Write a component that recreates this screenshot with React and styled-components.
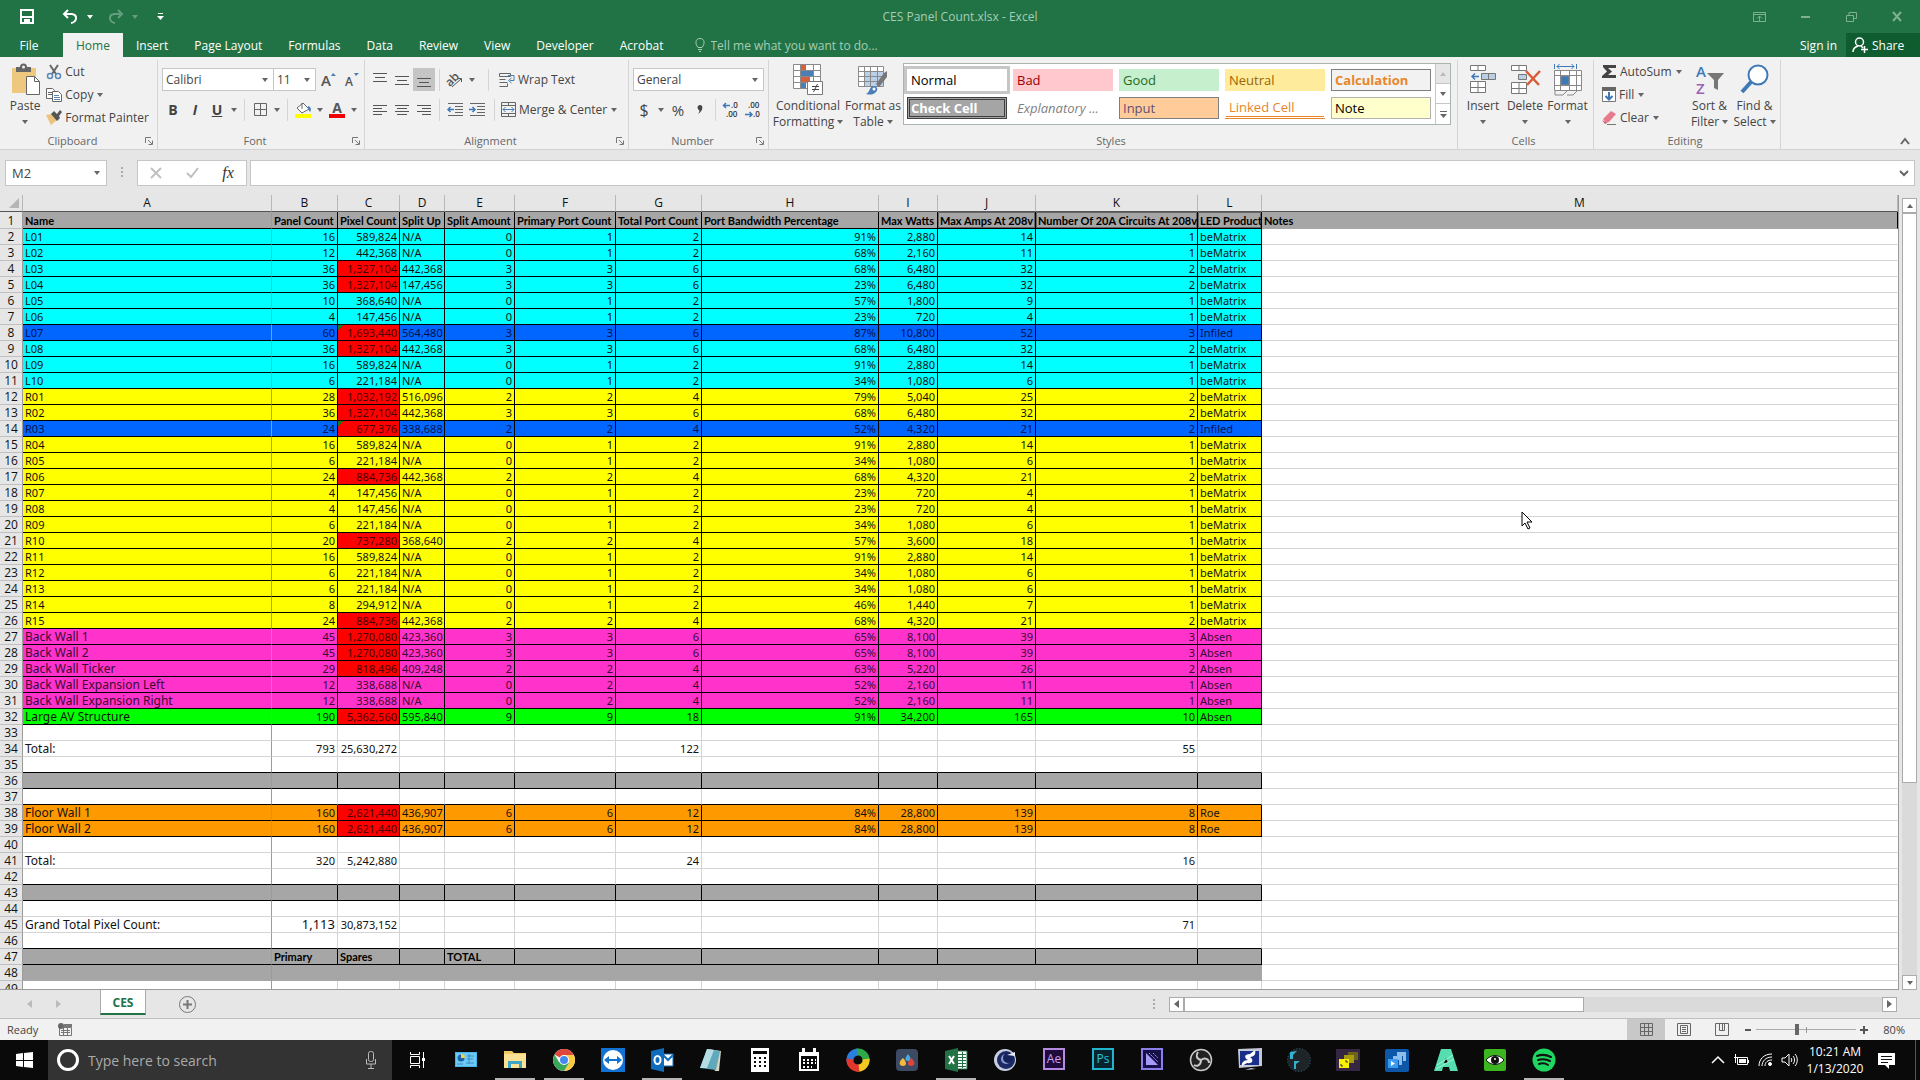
import React from 'react';
import styled, { createGlobalStyle, css } from 'styled-components';

const Global = createGlobalStyle`
  * {
    box-sizing: border-box;
  }
  body {
    margin: 0;
    overflow: hidden;
    font-family: 'Open Sans', 'Noto Sans', sans-serif;
    font-size: 12px;
    color: #444;
  }
  button, input, select {
    margin: 0;
    padding: 0;
    border: 0;
    background: none;
    font: inherit;
    color: inherit;
    outline: none;
    border-radius: 0;
  }
  svg {
    display: block;
    flex: none;
    overflow: visible;
  }
`;

const Window = styled.div`
  display: flex;
  flex-direction: column;
  height: 100vh;
  background: #e6e6e6;
`;

/* title bar and tabs */

const Header = styled.header`
  background: #217346;
  color: #fff;
`;

const TitleBar = styled.div`
  display: grid;
  grid-template-columns: 1fr auto 1fr;
  align-items: center;
  height: 33px;
`;

const QuickAccess = styled.div`
  display: flex;
  align-items: center;
  padding-left: 19px;
`;

const QuickButton = styled.button`
  display: flex;
  align-items: center;
  gap: 8px;
  height: 26px;
  margin-right: ${p => p.$gap || 0}px;
  opacity: ${p => (p.$off ? 0.3 : 1)};
`;

const Title = styled.h1`
  margin: 0;
  font-size: 12px;
  line-height: 30px;
  font-weight: 400;
  color: #a5cdb5;
`;

const Controls = styled.div`
  display: flex;
  justify-content: flex-end;
  height: 30px;
`;

const Control = styled.button`
  display: flex;
  align-items: center;
  justify-content: center;
  width: 46px;
  color: #7fb093;
`;

const Tabs = styled.nav`
  display: flex;
  height: 24px;
`;

const Tab = styled.button`
  padding: 0 13px;
  font-size: 12px;
  color: #fff;
  ${p => p.$file && css`
    width: 58px;
    margin-right: 5px;
  `}
  ${p => p.$active && css`
    background: #f1f1f1;
    color: #217346;
  `}
  ${p => p.$last && css`
    padding-right: 9px;
  `}
`;

const TellMe = styled.label`
  display: flex;
  flex: 1;
  align-items: center;
  gap: 6px;
  margin-left: 18px;
  color: #a5cdb5;
  input {
    width: 200px;
  }
  input::placeholder {
    color: #a5cdb5;
    opacity: 1;
  }
`;

const Share = styled.button`
  display: flex;
  align-items: center;
  gap: 4px;
  width: 74px;
  padding-left: 6px;
  background: #0e5c2f;
  color: #fff;
`;

/* ribbon */

const RibbonBar = styled.div`
  display: flex;
  height: 93px;
  background: #f1f1f1;
  border-bottom: 1px solid #d2d2d2;
`;

const GroupBox = styled.section`
  display: flex;
  flex-direction: column;
  width: ${p => p.$width}px;
  margin-top: 3px;
  border-right: 1px solid #d5d5d5;
`;

const GroupBody = styled.div`
  display: flex;
  flex: 1;
  padding: 0 4px 0 ${p => p.$left || 4}px;
`;

const GroupLabel = styled.div`
  display: flex;
  align-items: center;
  height: 17px;
  padding-right: 4px;
  font-size: 11px;
  color: #666;
  span {
    flex: 1;
    text-align: center;
  }
`;

const Launcher = styled.button`
  width: 8px;
  height: 8px;
`;

const Stack = styled.div`
  display: flex;
  flex-direction: column;
  gap: ${p => p.$gap || 0}px;
  padding-top: ${p => p.$top || 0}px;
`;

const Line = styled.div`
  display: flex;
  align-items: center;
  height: 23px;
`;

const Small = styled.button`
  display: flex;
  align-items: center;
  gap: 4px;
  height: 23px;
  padding: 0 4px 0 0;
  font-size: 12px;
  white-space: nowrap;
  > svg:first-child {
    margin-right: -1px;
  }
`;

const Tool = styled.button`
  display: flex;
  align-items: center;
  justify-content: center;
  width: ${p => p.$width || 22}px;
  height: 23px;
  font-size: ${p => p.$size || 14}px;
  line-height: 22px;
  font-weight: ${p => (p.$bold ? 700 : 400)};
  font-style: ${p => (p.$italic ? 'italic' : 'normal')};
  text-decoration: ${p => (p.$underline ? 'underline' : 'none')};
  background: ${p => (p.$on ? '#c5c5c5' : 'none')};
`;

const Rule = styled.span`
  width: 1px;
  height: 22px;
  margin: 0 ${p => p.$gap || 4}px;
  background: #d5d5d5;
`;

const Tall = styled.button`
  display: flex;
  flex-direction: column;
  align-items: center;
  width: ${p => p.$width}px;
  padding-top: 4px;
  font-size: 12px;
  line-height: 16px;
  white-space: nowrap;
  > svg:first-child {
    margin-bottom: 3px;
  }
  > svg:last-child {
    margin-top: 6px;
  }
  span {
    display: flex;
    align-items: center;
    gap: 3px;
    min-height: 16px;
  }
`;

const Field = styled.label`
  display: flex;
  align-items: center;
  width: ${p => p.$width}px;
  height: 23px;
  padding: 0 5px 0 3px;
  border: 1px solid #c6c6c6;
  background: #fff;
  & + & {
    margin-left: -1px;
  }
  select {
    flex: 1;
    min-width: 0;
    appearance: none;
  }
`;

const Gallery = styled.div`
  display: flex;
  height: 62px;
  margin-top: 3px;
  border: 1px solid #aab5ae;
  background: #fff;
`;

const Swatches = styled.div`
  display: grid;
  grid-template-columns: repeat(5, 100px);
  grid-auto-rows: 22px;
  gap: 6px;
  padding: 5px 4px 0 3px;
`;

const Swatch = styled.button`
  padding: 0 3px;
  background: ${p => p.$bg || '#fff'};
  color: ${p => p.$color};
  border: ${p => p.$border || '1px solid transparent'};
  outline: ${p => (p.$picked ? '3px solid #c6c6c6' : 'none')};
  font-size: 13px;
  line-height: 18px;
  font-weight: ${p => (p.$bold ? 700 : 400)};
  font-style: ${p => (p.$italic ? 'italic' : 'normal')};
  text-align: left;
  white-space: nowrap;
  ${p => p.$linked && css`
    border-bottom: 3px double #e8862a;
  `}
  ${p => p.$check && css`
    padding: 0 1px;
    line-height: 14px;
  `}
`;

const GalleryNav = styled.div`
  display: grid;
  grid-template-rows: repeat(3, 1fr);
  width: 15px;
  button {
    display: flex;
    align-items: center;
    justify-content: center;
    border-left: 1px solid #c6c6c6;
    border-bottom: 1px solid #c6c6c6;
  }
  button:first-child {
    background: #e6e6e6;
  }
  button:last-child {
    border-bottom: 0;
  }
`;

const Collapse = styled.button`
  align-self: flex-end;
  margin: 0 10px 4px auto;
`;

/* formula bar */

const FormulaBar = styled.div`
  display: flex;
  align-items: center;
  height: 45px;
  padding: 0 5px;
`;

const White = styled.label`
  display: flex;
  align-items: center;
  height: 26px;
  width: ${p => (p.$width ? p.$width + 'px' : 'auto')};
  flex: ${p => (p.$width ? 'none' : 1)};
  padding: 0 6px;
  border: 1px solid #c6c6c6;
  background: #fff;
  input {
    flex: 1;
    min-width: 0;
    font-size: 13px;
  }
`;

const Dots = styled.span`
  width: 2px;
  height: 11px;
  margin: 0 14px;
  background: repeating-linear-gradient(#aaa 0 2px, transparent 2px 4px);
`;

const FormulaTools = styled.div`
  display: flex;
  width: 110px;
  height: 26px;
  margin-right: 3px;
  border: 1px solid #c6c6c6;
  background: #fff;
  button {
    display: flex;
    flex: 1;
    align-items: center;
    justify-content: center;
  }
  i {
    font: italic 400 16px 'Liberation Serif', serif;
    color: #333;
  }
`;

/* sheet */

const Sheet = styled.main`
  display: flex;
  flex: 1;
  min-height: 0;
`;

const Grid = styled.div`
  position: relative;
  flex: 1;
  overflow: hidden;
  border-right: 1px solid #9b9b9b;
  border-bottom: 1px solid #9b9b9b;
  background: #fff;
`;

const Table = styled.table`
  width: 100%;
  table-layout: fixed;
  border-collapse: separate;
  border-spacing: 0;
  font-size: 11px;
  line-height: 15px;
  color: #111;
`;

const ColHead = styled.th`
  height: 17px;
  padding: 0;
  background: #e6e6e6;
  border-right: 1px solid #b8b8b8;
  border-bottom: 1px solid #555;
  font-size: 12px;
  line-height: 16px;
  font-weight: 400;
  svg {
    margin: 2px 3px 2px auto;
  }
`;

const RowHead = styled.th`
  padding: 0;
  background: #e6e6e6;
  border-right: 1px solid #9b9b9b;
  border-bottom: 1px solid #c0c0c0;
  font-size: 12px;
  font-weight: 400;
  text-align: center;
`;

const inks = {
  '#ff0000': '#480000',
  '#0066ff': '#00104e',
  '#ff33cc': '#3a0a30',
};

const Cell = styled.td`
  height: ${p => (p.$title ? 17 : 16)}px;
  padding: 0 2px;
  overflow: hidden;
  font-family: 'Noto Sans', sans-serif;
  font-size: ${p => p.$size || 11}px;
  white-space: nowrap;
  text-align: ${p => (p.$right ? 'right' : 'left')};
  background: ${p => p.$fill || '#fff'};
  color: ${p => inks[p.$fill] || '#111'};
  border-right: 1px solid ${p => p.$side};
  border-bottom: 1px solid ${p => p.$base};
  ${p => p.$bold && css`
    padding: 0 0 0 2px;
    font-family: Lato, sans-serif;
    font-weight: 700;
    color: #000;
  `}
  ${p => p.$framed && css`
    box-shadow: inset 0 0 0 1px #666;
  `}
  ${p => p.$flag && css`
    background: linear-gradient(135deg, #1c7a1c 4px, #ff0000 4px);
  `}
`;

const Pointer = styled.div`
  position: absolute;
  left: 1521px;
  top: 316px;
`;

const VScroll = styled.div`
  display: flex;
  flex-direction: column;
  width: 15px;
  margin: 3px 3px 0;
  background: #dadada;
`;

const ScrollButton = styled.button`
  display: flex;
  align-items: center;
  justify-content: center;
  flex: none;
  width: 15px;
  height: 15px;
  border: 1px solid #ababab;
  background: #fff;
`;

const Thumb = styled.span`
  border: 1px solid #ababab;
  background: #fff;
  flex: 0 0 ${p => p.$share}%;
`;

const Spacer = styled.span`
  flex: 1;
`;

const SheetBar = styled.div`
  display: flex;
  align-items: center;
  height: 29px;
  padding-right: 23px;
  border-bottom: 1px solid #c0c0c0;
`;

const SheetArrows = styled.div`
  display: flex;
  gap: 24px;
  width: 100px;
  padding-left: 27px;
`;

const SheetTab = styled.button`
  align-self: flex-start;
  width: 46px;
  height: 25px;
  margin-right: 33px;
  padding-top: 2px;
  background: #fff;
  border: 1px solid #ababab;
  border-top: 0;
  border-bottom: 2px solid #217346;
  color: #217346;
  font-size: 12px;
  font-weight: 700;
`;

const HScroll = styled.div`
  display: flex;
  width: 728px;
  height: 15px;
  background: #dadada;
`;

const StatusBar = styled.footer`
  display: flex;
  align-items: center;
  height: 21px;
  padding: 0 15px 0 7px;
  background: #f1f1f1;
  font-size: 11px;
`;

const Ready = styled.span`
  margin-right: 20px;
`;

const ViewButton = styled.button`
  display: flex;
  align-items: center;
  justify-content: center;
  width: 38px;
  height: 21px;
  background: ${p => (p.$on ? '#c8c8c8' : 'none')};
`;

const Zoom = styled.input`
  width: 100px;
  height: 16px;
  margin: 0 1px;
  appearance: none;
  background:
    linear-gradient(#999, #999) 50% 50% / 1px 6px no-repeat,
    linear-gradient(#aaa, #aaa) 0 50% / 100% 1px no-repeat;
  &::-webkit-slider-thumb {
    appearance: none;
    width: 4px;
    height: 11px;
    background: #666;
  }
`;

const Step = styled.button`
  display: flex;
  justify-content: center;
  width: 14px;
`;

const Percent = styled.span`
  margin-left: 12px;
`;

/* task bar */

const TaskBar = styled.div`
  display: flex;
  height: 40px;
  background: #0a0a0a;
  color: #fff;
`;

const Start = styled.button`
  display: flex;
  align-items: center;
  justify-content: center;
  width: 48px;
`;

const Search = styled.label`
  display: flex;
  align-items: center;
  gap: 9px;
  width: 344px;
  padding: 0 14px 0 9px;
  background: #333;
  input {
    flex: 1;
    font-size: 14px;
  }
  input::placeholder {
    color: #aaa;
    opacity: 1;
  }
`;

const Task = styled.button`
  display: flex;
  align-items: center;
  justify-content: center;
  width: 49px;
  border-top: 2px solid transparent;
  border-bottom: 2px solid transparent;
  background: ${p => (p.$open ? 'linear-gradient(#b5b5b5, #b5b5b5) 50% 100% / 40px 2px no-repeat border-box' : 'none')};
`;

const Tray = styled.div`
  display: flex;
  align-items: center;
  gap: 8px;
  margin-left: auto;
  padding-right: 4px;
`;

const Clock = styled.time`
  width: 58px;
  margin-right: 6px;
  font-size: 12px;
  line-height: 17px;
  text-align: center;
`;

const Corner = styled.span`
  width: 1px;
  height: 40px;
  margin-left: 12px;
  background: #555;
`;

const Caret = ({ color = '#666', up }) => (
  <svg width="6" height="4" viewBox="0 0 6 4"><path d={up ? 'M0 4h6L3 0z' : 'M0 0h6L3 4z'} fill={color} /></svg>
);

const Side = ({ left, color = '#666' }) => (
  <svg width="5" height="8" viewBox="0 0 5 8"><path d={left ? 'M5 0v8L0 4z' : 'M0 0v8l5-4z'} fill={color} /></svg>
);

const Lines = ({ rows, height = 14 }) => (
  <svg width="14" height={height} viewBox={`0 0 14 ${height}`} stroke="#555">
    {rows.map(([x, y, w]) => <path key={y} d={`M${x} ${y}.5h${w}`} />)}
  </svg>
);

const Group = ({ label, width, left, launcher, children }) => (
  <GroupBox $width={width}>
    <GroupBody $left={left}>{children}</GroupBody>
    <GroupLabel>
      <span>{label}</span>
      {launcher && (
        <Launcher aria-label={`${label} settings`}>
          <svg width="8" height="8" fill="none" stroke="#777"><path d="M.5 6V.5H6M3 3l4 4M7.5 3.5v4h-4" /></svg>
        </Launcher>
      )}
    </GroupLabel>
  </GroupBox>
);

const PasteIcon = () => (
  <svg width="30" height="31" viewBox="0 0 30 31">
    <path d="M2 4h24v25H2z" fill="#edc87e" />
    <path d="M6 3h4a3 3 0 0 1 7 0h4v5H6z" fill="#666" />
    <circle cx="13.500" cy="3" r="1.500" fill="#f1f1f1" />
    <path d="M16.500 12.500h8l5 5v13h-13z" fill="#fff" stroke="#666" />
    <path d="M24.500 12.500v5h5" fill="none" stroke="#666" />
  </svg>
);

const CutIcon = () => (
  <svg width="16" height="16" fill="none" strokeWidth="2">
    <path d="M4 1l6 9M12 1L6 10" stroke="#666" />
    <g stroke="#5b87b5" strokeWidth="1.500"><circle cx="4" cy="12" r="2.500" /><circle cx="12" cy="12" r="2.500" /></g>
  </svg>
);

const CopyIcon = () => (
  <svg width="16" height="14" fill="#fff" stroke="#666">
    <path d="M.5.500h6l2 2v8h-8z" /><path d="M2 4.500h4M2 6.500h4" />
    <path d="M6.500 3.500h6l3 3v7h-9z" /><path d="M8 7.500h5M8 9.500h6M8 11.500h6" stroke="#5b87b5" />
  </svg>
);

const BrushIcon = () => (
  <svg width="16" height="15">
    <path d="M0 5l6-1 5 6-6 5z" fill="#edc27c" />
    <path d="M5 4l3-3 3 3 3-4 2 2-3 4 1 2-3 3z" fill="#555" />
  </svg>
);

const GridIcon = () => (
  <svg width="13" height="13" fill="none" stroke="#666"><path d="M.5.500h12v12H.5zM6.500 0v13M0 6.500h13" /></svg>
);

const FillIcon = () => (
  <svg width="17" height="16">
    <path d="M2 6l6-5 6 6-7 4z" fill="#fff" stroke="#666" /><path d="M7 7V1" stroke="#666" />
    <path d="M13 4c4 1 3 5 2 6l-2-3z" fill="#4a7fb5" /><path d="M0 12h16v4H0z" fill="#ffff00" />
  </svg>
);

const FontColorIcon = () => (
  <svg width="16" height="16">
    <text x="8" y="11" textAnchor="middle" fontSize="14" fontWeight="700" fill="#555">A</text>
    <path d="M0 12h16v4H0z" fill="#f00000" />
  </svg>
);

const GrowIcon = ({ down }) => (
  <svg width="16" height="16">
    <text x="6" y="14" textAnchor="middle" fontSize={down ? 12 : 15} fontWeight="600" fill="#555">A</text>
    <path d={down ? 'M11 1h5l-3 3z' : 'M11 4h5l-3-3z'} fill="#4a7fb5" />
  </svg>
);

const OrientIcon = () => (
  <svg width="18" height="16">
    <text x="0" y="12" fontSize="12" fontWeight="600" fill="#555" transform="rotate(-45 6 9)">ab</text>
    <path d="M6 15L15 7M12 6.500h3.500V10" fill="none" stroke="#555" />
  </svg>
);

const WrapIcon = () => (
  <svg width="16" height="16" fill="none" stroke="#666">
    <path d="M.5 1.500h11v3H.5zM.5 7.500h6M.5 10.500h8M.5 14.500h8v-3" />
    <path d="M9 3.500h6v5h-4M12.500 6l-3 2.500 3 2.500" stroke="#4a7fb5" />
  </svg>
);

const MergeIcon = () => (
  <svg width="15" height="15" fill="none" stroke="#666">
    <path d="M.5.500h14v14H.5zM0 3.500h15M0 11.500h15M7.500 0v4M7.500 11v4" />
    <path d="M2 7.500h11M4.500 5l-2.500 2.500L4.500 10M10.500 5L13 7.500 10.500 10" stroke="#4a7fb5" />
  </svg>
);

const IndentIcon = ({ right }) => (
  <svg width="16" height="13" fill="none" stroke="#666">
    <path d="M1 .5h15M8 3.500h8M8 6.500h8M8 9.500h8M1 12.500h15" />
    <path d={right ? 'M0 6.500h6M3.500 4L6 6.500 3.500 9' : 'M1 6.500h6M3.500 4L1 6.500 3.500 9'} stroke="#3f79b5" strokeWidth="1.500" />
  </svg>
);

const DecimalIcon = ({ less }) => (
  <svg width="16" height="16" fontSize="8" fontWeight="600" fill="#333">
    <text x={less ? 3 : 8} y="6">{less ? '.00' : '.0'}</text>
    <text x={less ? 8 : 3} y="15">{less ? '.0' : '.00'}</text>
    <path d={less ? 'M0 12.500h7M4.500 10L7 12.500 4.500 15' : 'M0 3.500h7M3 1L.5 3.500 3 6'} fill="none" stroke="#3f79b5" strokeWidth="1.500" />
  </svg>
);

const ConditionalIcon = () => (
  <svg width="30" height="31">
    <path d="M.5.500h27v24H.5z" fill="#fff" />
    <path d="M8 1h5v6H8zM8 13h9v5H8z" fill="#d4603f" /><path d="M8 7h12v6H8zM8 18h5v6H8z" fill="#4a7fb5" />
    <path d="M.5.500h27v24H.5zM0 6.500h28M0 12.500h28M0 18.500h28M7.500 0v25M20.500 0v25" fill="none" stroke="#8a8a8a" />
    <path d="M14.500 17.500h15v13h-15z" fill="#fff" stroke="#777" />
    <path d="M19 22.500h7M19 25.500h7M24.500 20l-4 8" stroke="#444" />
  </svg>
);

const TableIcon = () => (
  <svg width="30" height="31">
    <path d="M.5 2.500h25v20H.5z" fill="#fff" /><path d="M7 8h18v14H7z" fill="#b9d0e8" />
    <path d="M.5 2.500h25v20H.5zM0 7.500h26M0 12.500h26M0 17.500h26M6.500 2v21M12.500 2v21M19.500 2v21" fill="none" stroke="#8a8a8a" />
    <path d="M29 7v6l-8 10-3-3 8-11z" fill="#777" /><path d="M8 30c4-1 3-8 8-8 4 1 4 4 2 6-3 3-6 3-10 2z" fill="#4a7fb5" />
    <circle cx="16" cy="25" r="1.500" fill="#fff" />
  </svg>
);

const InsertIcon = () => (
  <svg width="30" height="31" fill="#fff" stroke="#777">
    <path d="M2.500 1.500h15v5h-15zM10 1v6M2.500 17.500h15v11h-15zM10 17v12M2 23.500h16" />
    <path d="M13.500 9.500h14v6h-14zM20.500 9v7" fill="#b9cfe4" />
    <path d="M4 12.500h7M7 9.500l-3 3 3 3" fill="none" stroke="#3f79b5" strokeWidth="1.500" />
  </svg>
);

const DeleteIcon = () => (
  <svg width="30" height="31" fill="#fff" stroke="#777">
    <path d="M1.500 1.500h15v5h-15zM9 1v6M1.500 18.500h15v11h-15zM9 18v12M1 24.500h16" />
    <path d="M8.500 10.500h8v5h-8z" fill="#b9cfe4" />
    <path d="M16 7l13 14M30 7L17 21" fill="none" stroke="#d95b38" strokeWidth="2.500" />
  </svg>
);

const FormatIcon = () => (
  <svg width="30" height="31" fill="none" stroke="#888">
    <path d="M1.500 6.500h27v20h-27z" fill="#fff" /><path d="M8 12h8v9H8z" fill="#3f79b5" />
    <path d="M1 11.500h28M1 21.500h28M7.500 6v21M16.500 6v21M23.500 6v21" />
    <path d="M2 27v4h8l4-4M14 31h6l4-4" />
    <path d="M1.500 0v5M23.500 0v5M4 2.500h17M6.500 0L4 2.500 6.500 5M18.500 0L21 2.500 18.500 5" stroke="#3f79b5" />
  </svg>
);

const SortIcon = () => (
  <svg width="30" height="31">
    <text x="1" y="13" fontSize="15" fontWeight="600" fill="#3f79b5">A</text>
    <text x="1" y="30" fontSize="15" fontWeight="600" fill="#9a62b5">Z</text>
    <path d="M12 9h17l-6 7v10l-4-2v-8z" fill="#777" />
  </svg>
);

const FindIcon = () => (
  <svg width="30" height="31" fill="none" stroke="#3f79b5">
    <path d="M11 18L2 28" strokeWidth="4" /><circle cx="18" cy="11" r="9.500" fill="#fff" strokeWidth="2" />
  </svg>
);

const SumIcon = () => (
  <svg width="15" height="15"><path d="M1 1h13v3H6l4 3.500L6 11h8v3H0v-2l5-4.500L1 3z" fill="#444" /></svg>
);

const FillDownIcon = () => (
  <svg width="14" height="15" fill="#fff" stroke="#777">
    <path d="M.5.500h13v14H.5z" /><path d="M0 0h14v4H0z" fill="#666" stroke="none" />
    <path d="M7 5v7M3.500 9L7 12.500 10.500 9" fill="none" stroke="#3f79b5" strokeWidth="2" />
  </svg>
);

const ClearIcon = () => (
  <svg width="15" height="14"><path d="M1 8l8-8 5 3-7 8-3 1z" fill="#e8798b" /><path d="M0 9l5 3-2 1z" fill="#c75b6e" /><path d="M5 13.500h9" stroke="#777" /></svg>
);

const tabs = ['Insert', 'Page Layout', 'Formulas', 'Data', 'Review', 'View', 'Developer', 'Acrobat'];

const TopBar = () => (
  <Header>
    <TitleBar>
      <QuickAccess>
        <QuickButton aria-label="Save" $gap={27}>
          <svg width="16" height="15" fill="none" stroke="#fff" strokeWidth="2"><path d="M2 1h12v13H2zM2 8h12" /><path d="M5 10h6v5H5z" fill="#fff" stroke="none" /></svg>
        </QuickButton>
        <QuickButton aria-label="Undo" $gap={14}>
          <svg width="17" height="15" fill="none" stroke="#fff" strokeWidth="2"><path d="M6 1L2 5l4 4M2 5h8c6 1 5 8-1 9" /></svg>
          <Caret color="#fff" />
        </QuickButton>
        <QuickButton aria-label="Redo" $gap={19} $off>
          <svg width="17" height="15" fill="none" stroke="#fff" strokeWidth="2"><path d="M11 1l4 4-4 4M15 5H7C1 6 2 13 8 14" /></svg>
          <Caret color="#fff" />
        </QuickButton>
        <QuickButton aria-label="Customize">
          <svg width="7" height="7"><path d="M1 .5h5" stroke="#fff" /><path d="M0 3h7L3.500 7z" fill="#fff" /></svg>
        </QuickButton>
      </QuickAccess>
      <Title>CES Panel Count.xlsx - Excel</Title>
      <Controls>
        <Control aria-label="Ribbon options">
          <svg width="13" height="10" fill="none" stroke="currentColor"><path d="M.5.500h12v9H.5zM0 2.500h13M6.500 9V4M4 6.500L6.500 4 9 6.500" /></svg>
        </Control>
        <Control aria-label="Minimize"><svg width="9" height="2"><path d="M0 1h9" stroke="currentColor" strokeWidth="2" /></svg></Control>
        <Control aria-label="Restore">
          <svg width="11" height="10" fill="none" stroke="currentColor"><path d="M.5 3.500h7v6h-7zM3 3V.5h7.500v6H8" /></svg>
        </Control>
        <Control aria-label="Close"><svg width="10" height="9"><path d="M1 0l8 9M9 0L1 9" stroke="currentColor" strokeWidth="2" /></svg></Control>
      </Controls>
    </TitleBar>
    <Tabs>
      <Tab $file>File</Tab>
      <Tab $active>Home</Tab>
      {tabs.map(t => <Tab key={t}>{t}</Tab>)}
      <TellMe>
        <svg width="10" height="14" fill="none" stroke="currentColor"><path d="M3 9.500C0 6 0 .5 5 .5s5 5.500 2 9zM3 11.500h4M4 13.500h2" /></svg>
        <input aria-label="Tell me" placeholder="Tell me what you want to do..." />
      </TellMe>
      <Tab $last>Sign in</Tab>
      <Share>
        <svg width="16" height="16" fill="none" stroke="#fff" strokeWidth="1.500"><circle cx="7.500" cy="5" r="4" /><path d="M1 15c0-4 2-5 5-6M9 9l2 2M12.500 9v7M9 12.500h7" /></svg>
        Share
      </Share>
    </Tabs>
  </Header>
);

const swatches = [
  { text: 'Normal', $color: '#000', $picked: true },
  { text: 'Bad', $color: '#9c0006', $bg: '#ffc7ce' },
  { text: 'Good', $color: '#1f6b1f', $bg: '#c6efce' },
  { text: 'Neutral', $color: '#9c6500', $bg: '#ffeb9c' },
  { text: 'Calculation', $color: '#e8862a', $bg: '#f2f2f2', $border: '1px solid #7f7f7f', $bold: true },
  { text: 'Check Cell', $color: '#fff', $bg: '#a5a5a5', $border: '3px double #3f3f3f', $bold: true, $check: true },
  { text: 'Explanatory ...', $color: '#7f7f7f', $italic: true },
  { text: 'Input', $color: '#5f4f76', $bg: '#ffcc99', $border: '1px solid #7f7f7f' },
  { text: 'Linked Cell', $color: '#e8862a', $linked: true },
  { text: 'Note', $color: '#000', $bg: '#ffffcc', $border: '1px solid #b2b2b2' },
];

const Ribbon = () => (
  <RibbonBar>
    <Group label="Clipboard" width={158} launcher>
      <Tall $width={45}><PasteIcon /><span>Paste</span><Caret /></Tall>
      <Stack>
        <Small><CutIcon />Cut</Small>
        <Small><CopyIcon />Copy <Caret /></Small>
        <Small><BrushIcon />Format Painter</Small>
      </Stack>
    </Group>
    <Group label="Font" width={207} launcher>
      <Stack $top={8} $gap={7}>
        <Line>
          <Field $width={112}><select aria-label="Font name"><option>Calibri</option></select><Caret /></Field>
          <Field $width={43}><select aria-label="Font size"><option>11</option></select><Caret /></Field>
          <Tool $width={24} aria-label="Grow font"><GrowIcon /></Tool>
          <Tool aria-label="Shrink font"><GrowIcon down /></Tool>
        </Line>
        <Line>
          <Tool $bold>B</Tool>
          <Tool $bold $italic>I</Tool>
          <Tool $bold $underline>U</Tool>
          <Tool $width={12} aria-label="Underline options"><Caret /></Tool>
          <Rule />
          <Tool aria-label="Borders"><GridIcon /></Tool>
          <Tool $width={12} aria-label="Border options"><Caret /></Tool>
          <Rule />
          <Tool aria-label="Fill color"><FillIcon /></Tool>
          <Tool $width={12} aria-label="Fill options"><Caret /></Tool>
          <Tool aria-label="Font color"><FontColorIcon /></Tool>
          <Tool $width={12} aria-label="Font color options"><Caret /></Tool>
        </Line>
      </Stack>
    </Group>
    <Group label="Alignment" width={264} launcher>
      <Stack $top={8} $gap={7}>
        <Line>
          <Tool aria-label="Top align"><Lines rows={[[0, 0, 14], [2, 4, 10], [0, 8, 14]]} /></Tool>
          <Tool aria-label="Middle align"><Lines rows={[[0, 3, 14], [2, 7, 10], [0, 11, 14]]} /></Tool>
          <Tool $on aria-label="Bottom align"><Lines rows={[[0, 5, 14], [2, 9, 10], [0, 13, 14]]} /></Tool>
          <Rule />
          <Tool aria-label="Orientation"><OrientIcon /></Tool>
          <Tool $width={12} aria-label="Orientation options"><Caret /></Tool>
          <Rule $gap={10} />
          <Small><WrapIcon />Wrap Text</Small>
        </Line>
        <Line>
          <Tool aria-label="Align left"><Lines height={12} rows={[[0, 1, 14], [0, 4, 9], [0, 7, 14], [0, 10, 9]]} /></Tool>
          <Tool aria-label="Center"><Lines height={12} rows={[[0, 1, 14], [2, 4, 10], [0, 7, 14], [2, 10, 10]]} /></Tool>
          <Tool aria-label="Align right"><Lines height={12} rows={[[0, 1, 14], [5, 4, 9], [0, 7, 14], [5, 10, 9]]} /></Tool>
          <Rule />
          <Tool aria-label="Decrease indent"><IndentIcon /></Tool>
          <Tool aria-label="Increase indent"><IndentIcon right /></Tool>
          <Rule $gap={6} />
          <Small><MergeIcon />Merge &amp; Center <Caret /></Small>
        </Line>
      </Stack>
    </Group>
    <Group label="Number" width={140} launcher>
      <Stack $top={8} $gap={7}>
        <Line><Field $width={131}><select aria-label="Number format"><option>General</option></select><Caret /></Field></Line>
        <Line>
          <Tool $size={16}>$</Tool>
          <Tool $width={12} aria-label="Currency options"><Caret /></Tool>
          <Tool $size={15}>%</Tool>
          <Tool aria-label="Comma style"><svg width="6" height="9"><path d="M3 0c3 0 4 5-2 9 1-2 2-3 1-4-2-1-2-5 1-5z" fill="#444" /></svg></Tool>
          <Rule />
          <Tool aria-label="Increase decimal"><DecimalIcon /></Tool>
          <Tool aria-label="Decrease decimal"><DecimalIcon less /></Tool>
        </Line>
      </Stack>
    </Group>
    <Group label="Styles" width={689}>
      <Tall $width={70}><ConditionalIcon /><span>Conditional</span><span>Formatting <Caret /></span></Tall>
      <Tall $width={60}><TableIcon /><span>Format as</span><span>Table <Caret /></span></Tall>
      <Gallery>
        <Swatches>
          {swatches.map(({ text, ...look }) => <Swatch key={text} {...look}>{text}</Swatch>)}
        </Swatches>
        <GalleryNav>
          <button aria-label="Previous styles"><Caret up color="#bbb" /></button>
          <button aria-label="Next styles"><Caret /></button>
          <button aria-label="More styles"><svg width="7" height="7"><path d="M0 .5h7" stroke="#666" /><path d="M0 3h7L3.500 7z" fill="#666" /></svg></button>
        </GalleryNav>
      </Gallery>
    </Group>
    <Group label="Cells" width={136}>
      <Tall $width={42}><InsertIcon /><span>Insert</span><Caret /></Tall>
      <Tall $width={42}><DeleteIcon /><span>Delete</span><Caret /></Tall>
      <Tall $width={43}><FormatIcon /><span>Format</span><Caret /></Tall>
    </Group>
    <Group label="Editing" width={187} left={8}>
      <Stack>
        <Small><SumIcon />AutoSum <Caret /></Small>
        <Small><FillDownIcon />Fill <Caret /></Small>
        <Small><ClearIcon />Clear <Caret /></Small>
      </Stack>
      <Tall $width={48}><SortIcon /><span>Sort &amp;</span><span>Filter <Caret /></span></Tall>
      <Tall $width={42}><FindIcon /><span>Find &amp;</span><span>Select <Caret /></span></Tall>
    </Group>
    <Collapse aria-label="Collapse ribbon">
      <svg width="10" height="8" fill="none" stroke="#666" strokeWidth="2"><path d="M1 7l4-5 4 5" /></svg>
    </Collapse>
  </RibbonBar>
);

const C = '#00ffff';
const B = '#0066ff';
const Y = '#ffff00';
const P = '#ff33cc';
const G = '#00ff00';
const O = '#ff9900';
const GREY = '#a6a6a6';

const columns = [249, 66, 62, 45, 70, 101, 86, 177, 59, 98, 162, 64];

const titles = ['Name', 'Panel Count', 'Pixel Count', 'Split Up', 'Split Amount', 'Primary Port Count', 'Total Port Count',
  'Port Bandwidth Percentage', 'Max Watts', 'Max Amps At 208v', 'Number Of 20A Circuits At 208v', 'LED Product', 'Notes'];

// fill, then the cells A to L; a * marks an over-limit pixel count, a ! one with an error flag
const filled = {
  2: [C, 'L01|16|589,824|N/A|0|1|2|91%|2,880|14|1|beMatrix'],
  3: [C, 'L02|12|442,368|N/A|0|1|2|68%|2,160|11|1|beMatrix'],
  4: [C, 'L03|36|*1,327,104|442,368|3|3|6|68%|6,480|32|2|beMatrix'],
  5: [C, 'L04|36|*1,327,104|147,456|3|3|6|23%|6,480|32|2|beMatrix'],
  6: [C, 'L05|10|368,640|N/A|0|1|2|57%|1,800|9|1|beMatrix'],
  7: [C, 'L06|4|147,456|N/A|0|1|2|23%|720|4|1|beMatrix'],
  8: [B, 'L07|60|!1,693,440|564,480|3|3|6|87%|10,800|52|3|Infiled'],
  9: [C, 'L08|36|*1,327,104|442,368|3|3|6|68%|6,480|32|2|beMatrix'],
  10: [C, 'L09|16|589,824|N/A|0|1|2|91%|2,880|14|1|beMatrix'],
  11: [C, 'L10|6|221,184|N/A|0|1|2|34%|1,080|6|1|beMatrix'],
  12: [Y, 'R01|28|*1,032,192|516,096|2|2|4|79%|5,040|25|2|beMatrix'],
  13: [Y, 'R02|36|*1,327,104|442,368|3|3|6|68%|6,480|32|2|beMatrix'],
  14: [B, 'R03|24|!677,376|338,688|2|2|4|52%|4,320|21|2|Infiled'],
  15: [Y, 'R04|16|589,824|N/A|0|1|2|91%|2,880|14|1|beMatrix'],
  16: [Y, 'R05|6|221,184|N/A|0|1|2|34%|1,080|6|1|beMatrix'],
  17: [Y, 'R06|24|*884,736|442,368|2|2|4|68%|4,320|21|2|beMatrix'],
  18: [Y, 'R07|4|147,456|N/A|0|1|2|23%|720|4|1|beMatrix'],
  19: [Y, 'R08|4|147,456|N/A|0|1|2|23%|720|4|1|beMatrix'],
  20: [Y, 'R09|6|221,184|N/A|0|1|2|34%|1,080|6|1|beMatrix'],
  21: [Y, 'R10|20|*737,280|368,640|2|2|4|57%|3,600|18|1|beMatrix'],
  22: [Y, 'R11|16|589,824|N/A|0|1|2|91%|2,880|14|1|beMatrix'],
  23: [Y, 'R12|6|221,184|N/A|0|1|2|34%|1,080|6|1|beMatrix'],
  24: [Y, 'R13|6|221,184|N/A|0|1|2|34%|1,080|6|1|beMatrix'],
  25: [Y, 'R14|8|294,912|N/A|0|1|2|46%|1,440|7|1|beMatrix'],
  26: [Y, 'R15|24|*884,736|442,368|2|2|4|68%|4,320|21|2|beMatrix'],
  27: [P, 'Back Wall 1|45|*1,270,080|423,360|3|3|6|65%|8,100|39|3|Absen'],
  28: [P, 'Back Wall 2|45|*1,270,080|423,360|3|3|6|65%|8,100|39|3|Absen'],
  29: [P, 'Back Wall Ticker|29|*818,496|409,248|2|2|4|63%|5,220|26|2|Absen'],
  30: [P, 'Back Wall Expansion Left|12|338,688|N/A|0|2|4|52%|2,160|11|1|Absen'],
  31: [P, 'Back Wall Expansion Right|12|338,688|N/A|0|2|4|52%|2,160|11|1|Absen'],
  32: [G, 'Large AV Structure|190|*5,362,560|595,840|9|9|18|91%|34,200|165|10|Absen'],
  34: [null, 'Total:|793|25,630,272||||122||||55|'],
  36: [GREY, '|||||||||||'],
  38: [O, 'Floor Wall 1|160|*2,621,440|436,907|6|6|12|84%|28,800|139|8|Roe'],
  39: [O, 'Floor Wall 2|160|*2,621,440|436,907|6|6|12|84%|28,800|139|8|Roe'],
  41: [null, 'Total:|320|5,242,880||||24||||16|'],
  43: [GREY, '|||||||||||'],
  45: [null, 'Grand Total Pixel Count:|1,113|30,873,152||||||||71|'],
  47: [GREY, '|Primary|Spares||TOTAL|||||||'],
  48: [GREY, '|||||||||||'],
};

const isBoxed = n => n !== 48 && Boolean(filled[n] && filled[n][0]);

const SheetRow = ({ n }) => {
  const [fill, text] = filled[n] || [null, '|||||||||||'];
  const boxed = isBoxed(n);
  const grid = boxed ? '#000' : n === 48 ? fill : '#d4d4d4';
  const base = isBoxed(n + 1) ? '#000' : grid;
  return (
    <tr>
      <RowHead scope="row">{n}</RowHead>
      {text.split('|').map((value, i) => {
        const hot = value[0] === '*' || value[0] === '!';
        const shown = hot ? value.slice(1) : value;
        return (
          <Cell
            key={i}
            $fill={hot ? '#ff0000' : fill}
            $flag={value[0] === '!'}
            $side={i === 0 ? '#9b9b9b' : grid}
            $base={base}
            $right={i > 0 && /^\d/.test(shown)}
            $bold={n === 47}
            $size={shown === '1,113' ? 13 : i === 0 && n > 26 ? 12 : 11}
          >
            {shown}
          </Cell>
        );
      })}
      <Cell $side="#fff" $base="#d4d4d4" />
    </tr>
  );
};

const Spreadsheet = () => (
  <Sheet>
    <Grid>
      <Table>
        <colgroup>
          <col width="23" />
          {columns.map((w, i) => <col key={i} width={w} />)}
          <col />
        </colgroup>
        <thead>
          <tr>
            <ColHead aria-label="Select all"><svg width="10" height="10"><path d="M10 0v10H0z" fill="#b5b5b5" /></svg></ColHead>
            {'ABCDEFGHIJKLM'.split('').map(l => <ColHead key={l} scope="col">{l}</ColHead>)}
          </tr>
        </thead>
        <tbody>
          <tr>
            <RowHead scope="row">1</RowHead>
            {titles.map((t, i) => (
              <Cell key={t} $title $bold $fill={GREY} $side={i === 0 ? '#9b9b9b' : '#000'} $base={i === 12 ? '#a6a6a6' : '#000'} $framed={i > 8 && i < 12}>{t}</Cell>
            ))}
          </tr>
          {Array.from({ length: 48 }, (_, i) => <SheetRow key={i} n={i + 2} />)}
        </tbody>
      </Table>
      <Pointer>
        <svg width="12" height="19"><path d="M1 1v14l3-3 3 6 2-1-3-6h5z" fill="#fff" stroke="#000" /></svg>
      </Pointer>
    </Grid>
    <VScroll>
      <ScrollButton aria-label="Scroll up"><Caret up /></ScrollButton>
      <Thumb $share={72} />
      <Spacer />
      <ScrollButton aria-label="Scroll down"><Caret /></ScrollButton>
    </VScroll>
  </Sheet>
);

const tasks = [
  ['Monitor', <><path d="M1 4h22v15H1z" fill="#48b4ec" /><path d="M2 5h20v13H2z" fill="#6ec9f5" /><circle cx="7" cy="10" r="3.500" fill="#1c66a8" /><path d="M7 10V6a4 4 0 0 1 4 4z" fill="#f2d04e" /><path d="M13 8h7M13 11h6M3 16h6M12 15h8M15 6v10" stroke="#3a8fc4" /></>],
  ['Files', <><path d="M1 3h8l2 2h12v15H1z" fill="#f0c964" /><path d="M1 6h22v14H1z" fill="#fbe193" /><path d="M5 20v-7h14v7h-3v-4H8v4z" fill="#3ea5c9" /></>, true],
  ['Chrome', <><circle cx="12" cy="12" r="11" fill="#fff" /><path d="M12 12L2.500 6.500A11 11 0 0 1 21.500 6.500z" fill="#e0453a" /><path d="M12 7h9.800a11 11 0 0 1-9.800 16l5-8z" fill="#fbcb3f" /><path d="M2.500 6.500A11 11 0 0 0 12 23l5-8-10-1z" fill="#3aa657" /><circle cx="12" cy="12" r="5" fill="#fff" /><circle cx="12" cy="12" r="4" fill="#4688f1" /></>, true],
  ['Remote', <><path d="M0 0h24v24H0z" fill="#1272d3" /><circle cx="12" cy="12" r="10" fill="#fff" /><path d="M3 12l5-4v3h8V8l5 4-5 4v-3H8v3z" fill="#1272d3" /></>],
  ['Mail', <><path d="M13 6h10v12H13z" fill="#fff" stroke="#0f6cbd" /><path d="M13 7l5 5 5-5" fill="none" stroke="#0f6cbd" strokeWidth="2" /><path d="M1 3l13-3v24L1 21z" fill="#0f6cbd" /><ellipse cx="7.500" cy="12" rx="3" ry="4" fill="none" stroke="#fff" strokeWidth="2" /></>, true],
  ['Notepad', <><path d="M9 1l13 2-2 20-4 0z" fill="#d8d3c0" /><path d="M8 1l13 2-4 19L1 20z" fill="#5fa9ba" /><path d="M8 1l7 1-7 18-7 0z" fill="#b7dde4" /></>],
  ['Calculator', <><path d="M3 0h18v24H3z" fill="#fff" /><path d="M5 3h14v3H5z" fill="#0a0a0a" /><path d="M6 10h13M6 14h13M6 18h13" stroke="#0a0a0a" strokeWidth="2" strokeDasharray="2 3" /></>],
  ['Calendar', <><path d="M3 5h18v17H3z" fill="none" stroke="#fff" strokeWidth="2" /><path d="M2 4h20v4H2zM5 0h3v5H5zM16 0h3v5h-3z" fill="#fff" /><path d="M6 12h13M6 15h13M6 19h9" stroke="#fff" strokeWidth="2" strokeDasharray="2 2" /></>],
  ['Player', <g fill="none" strokeWidth="7"><path d="M4 13a8 8 0 0 1 8-9" stroke="#2a7de1" /><path d="M11 4a8 8 0 0 1 9 9" stroke="#2fa84a" /><path d="M20 11a8 8 0 0 1-9 9" stroke="#f3c921" /><path d="M13 20a8 8 0 0 1-9-9" stroke="#e2362e" /></g>],
  ['Resolve', <><rect x="1" y="1" width="22" height="22" rx="4" fill="#3d4a63" /><path d="M13 6c4 5 3 7 0 7s-4-2 0-7z" fill="#49a8e0" /><path d="M8 10c4 4 4 8 0 8s-5-4 0-8z" fill="#f2b93c" /><path d="M16 10c5 4 4 8 0 8s-4-4 0-8z" fill="#e0433c" /></>],
  ['Excel', <><path d="M12 3h11v18H12z" fill="#fff" stroke="#217346" /><path d="M14 6.500h8M14 9.500h8M14 12.500h8M14 15.500h8M14 18.500h8M18.500 4v16" stroke="#217346" /><path d="M1 3l13-3v24L1 21z" fill="#217346" /><path d="M5 8l5 8M10 8l-5 8" stroke="#fff" strokeWidth="2" /></>, true],
  ['Cinema', <><circle cx="12" cy="12" r="11" fill="#c9cfdf" /><circle cx="13" cy="12" r="9" fill="#1d2a66" /><circle cx="13" cy="11" r="5" fill="#8a9ac9" /><circle cx="15" cy="10" r="5" fill="#16205a" /><path d="M14 7l8-3v4z" fill="#e8ebf4" /></>],
  ['After Effects', <><path d="M2 1h20v20H2z" fill="#1f0a3c" stroke="#b48ae0" strokeWidth="2" /><text x="12" y="15" textAnchor="middle" fontSize="12" fill="#c9a3ee">Ae</text></>],
  ['Photoshop', <><path d="M2 1h20v20H2z" fill="#07242e" stroke="#20b4cf" strokeWidth="2" /><text x="12" y="15" textAnchor="middle" fontSize="12" fill="#29c5e0">Ps</text></>],
  ['Encoder', <><path d="M2 1h20v20H2z" fill="#170f48" stroke="#8a7fe8" strokeWidth="2" /><path d="M6 5l12 12H6z" fill="#a59af5" /><path d="M9 5l9 9M13 5l5 5" stroke="#a59af5" strokeDasharray="2 1" /></>],
  ['Studio', <g fill="none" stroke="#c9c9c9"><circle cx="12" cy="12" r="10.500" fill="#222" strokeWidth="1.500" /><path d="M12 12c-5-1-5-5-3-8M12 12c4-3 8-1 8 3M12 12c0 5-4 7-7 5" strokeWidth="2" /></g>],
  ['Screen', <><path d="M0 1l24-1v18L1 20z" fill="#c5c9d6" /><path d="M2 3h19v14H2z" fill="#1a2f8a" /><path d="M17 2l-5 4c-6 0-6 4-2 6-4 0-7 3-6 6l5-3c6 1 7-3 3-6 5 0 6-4 5-7z" fill="#fff" /><path d="M7 22l6-2 5 1z" fill="#c5c9d6" /></>],
  ['Director', <><circle cx="12" cy="12" r="11.500" fill="#1e2428" stroke="#2a6878" strokeDasharray="1 2" /><path d="M3 4l7-1-4 4v4H3zM7 13h6l-4 3v5H7z" fill="#35b1d0" /></>],
  ['Mapper', <><path d="M0 1h24v22H0z" fill="#352741" /><path d="M12 4h10v8H12z" fill="#6c6417" /><path d="M8 7h10v8H8z" fill="#a79b12" /><path d="M3 11h10v9H3z" fill="#f8f000" /><path d="M5 16v2h2M9 13h2v2" stroke="#352741" fill="none" /></>],
  ['Designer', <><rect y="1" width="24" height="23" rx="2" fill="#0d57a8" /><path d="M12 4h9v9h-3V8h-6zM8 8h9v9h-3v-5H8z" fill="#8dbdea" /><path d="M3 11h10v9H3z" fill="#3a9cf0" /><path d="M6 13v5l4-2.500z" fill="#fff" /></>],
  ['Arena', <><path d="M7 1h10l7 22h-8l-1-4H9l-1 4H0z" fill="#56ddb0" /><path d="M12 10l2 5h-4z" fill="#0a0a0a" /><path d="M3 17L19 7M2 21l18-10" stroke="#a5f2d7" /></>],
  ['Viewer', <><rect x="1" y="1" width="22" height="22" rx="2" fill="#3cb521" /><path d="M3 12c5-6 13-6 18 0-5 6-13 6-18 0z" fill="#fff" stroke="#111" /><circle cx="12" cy="12" r="4" fill="#111" /><circle cx="12" cy="11" r="1" fill="#fff" /></>],
  ['Music', <><circle cx="12" cy="12" r="11.500" fill="#1ed760" /><path d="M5 8c5-2 10-1 14 1M6 12c4-1 8-1 12 1M7 16c3-1 6-1 9 1" fill="none" stroke="#111" strokeWidth="2" strokeLinecap="round" /></>, true],
];

const Desktop = () => (
  <TaskBar>
    <Start aria-label="Start">
      <svg width="17" height="16" fill="#fff"><path d="M0 2l7-1v7H0zM8 1l9-1v8H8zM0 9h7v6l-7-1zM8 9h9v7l-9-1z" /></svg>
    </Start>
    <Search>
      <svg width="22" height="22"><circle cx="11" cy="11" r="9.500" fill="none" stroke="#fff" strokeWidth="3" /></svg>
      <input aria-label="Search" placeholder="Type here to search" />
      <svg width="14" height="18" fill="none" stroke="#bbb"><rect x="4.500" y=".5" width="5" height="10" rx="2" /><path d="M2.500 8v5h9V8M7 13v4M4 17.500h6" /></svg>
    </Search>
    <Task aria-label="Task view">
      <svg width="18" height="16" fill="none" stroke="#fff"><path d="M2.500 4.500h9v7h-9zM2.500 0v2.500h9V0M2.500 16v-2.500h9V16M15.500 0v16" /><path d="M14 6h3v3h-3z" fill="#fff" stroke="none" /></svg>
    </Task>
    {tasks.map(([name, art, open]) => (
      <Task key={name} aria-label={name} $open={open}>
        <svg width="24" height="24">{art}</svg>
      </Task>
    ))}
    <Tray>
      <svg width="14" height="8" fill="none" stroke="#fff" strokeWidth="1.500"><path d="M1 7l6-6 6 6" /></svg>
      <svg width="17" height="14" fill="none" stroke="#fff"><path d="M4.500 4.500h10v7h-10zM15.500 7v3M2.500 1v3M1 4.500h4M2.500 5v5" /><path d="M6 6h7v4H6z" fill="#fff" stroke="none" /></svg>
      <svg width="15" height="14" fill="none" stroke="#fff"><path d="M1 13C1 6 6 1 14 1M4 13c0-5 4-9 10-9M7 13c0-4 3-6 7-6" /><circle cx="12" cy="11" r="1.500" fill="#fff" /></svg>
      <svg width="17" height="14" fill="none" stroke="#fff"><path d="M1 5h3l4-4v12L4 9H1zM10 5c1 1 1 3 0 4M12 3c2 2 2 6 0 8M14 1c3 3 3 9 0 12" /></svg>
      <Clock>10:21 AM<br />1/13/2020</Clock>
      <svg width="17" height="17"><path d="M0 1h17v12h-6v4l-4-4H0z" fill="#fff" /><path d="M3 4.500h11M3 7.500h11M3 10.500h7" stroke="#111" /></svg>
      <Corner />
    </Tray>
  </TaskBar>
);

const App = () => (
  <Window>
    <Global />
    <TopBar />
    <Ribbon />
    <FormulaBar>
      <White $width={102}><input aria-label="Name box" defaultValue="M2" /><Caret /></White>
      <Dots />
      <FormulaTools>
        <button aria-label="Cancel"><svg width="12" height="10"><path d="M1 0l10 10M11 0L1 10" stroke="#c0c0c0" strokeWidth="2" /></svg></button>
        <button aria-label="Enter"><svg width="13" height="10" fill="none"><path d="M1 5l4 4 7-9" stroke="#c0c0c0" strokeWidth="2" /></svg></button>
        <button aria-label="Insert function"><i>fx</i></button>
      </FormulaTools>
      <White>
        <input aria-label="Formula" />
        <svg width="8" height="6" fill="none" stroke="#666" strokeWidth="2"><path d="M0 1l4 4 4-4" /></svg>
      </White>
    </FormulaBar>
    <Spreadsheet />
    <SheetBar>
      <SheetArrows><Side left color="#bbb" /><Side color="#bbb" /></SheetArrows>
      <SheetTab>CES</SheetTab>
      <button aria-label="New sheet">
        <svg width="17" height="17" fill="none" stroke="#777"><circle cx="8.500" cy="8.500" r="8" /><path d="M4 8.500h9M8.500 4v9" strokeWidth="2" /></svg>
      </button>
      <Spacer />
      <Dots />
      <HScroll>
        <ScrollButton aria-label="Scroll left"><Side left /></ScrollButton>
        <Thumb $share={55} />
        <Spacer />
        <ScrollButton aria-label="Scroll right"><Side /></ScrollButton>
      </HScroll>
    </SheetBar>
    <StatusBar>
      <Ready>Ready</Ready>
      <svg width="14" height="13" fill="none" stroke="#777"><path d="M1.500 4.500h12v8h-12zM3 7.500h9M3 9.500h9M5.500 5v7M9.500 5v7" /><path d="M6 1h8v3H6z" fill="#777" stroke="none" /><circle cx="3" cy="3" r="3" fill="#666" stroke="none" /></svg>
      <Spacer />
      <ViewButton $on aria-label="Normal view"><svg width="13" height="13" fill="none" stroke="#666"><path d="M.5.500h12v12H.5zM4.500 0v13M8.500 0v13M0 4.500h13M0 8.500h13" /></svg></ViewButton>
      <ViewButton aria-label="Page layout view"><svg width="14" height="13" fill="none" stroke="#666"><path d="M.5.500h13v12H.5zM3.500 2.500h7v8h-7zM5 4.500h4M5 6.500h4M5 8.500h4" /></svg></ViewButton>
      <ViewButton aria-label="Page break view"><svg width="14" height="13" fill="none" stroke="#666"><path d="M.5.500h13v12H.5zM4.500 0v7.500h5V0M7.500 0v7" /></svg></ViewButton>
      <Step aria-label="Zoom out"><svg width="8" height="8"><path d="M1 4h6" stroke="#555" strokeWidth="2" /></svg></Step>
      <Zoom type="range" min="0" max="100" defaultValue="40" aria-label="Zoom" />
      <Step aria-label="Zoom in"><svg width="8" height="8"><path d="M0 4h8M4 0v8" stroke="#555" strokeWidth="2" /></svg></Step>
      <Percent>80%</Percent>
    </StatusBar>
    <Desktop />
  </Window>
);

export default App;
